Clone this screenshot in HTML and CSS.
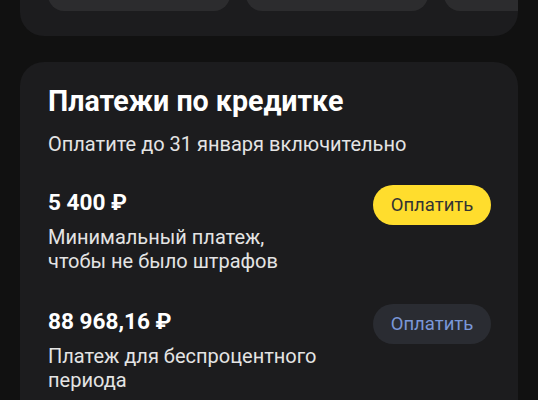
FILE: index.html
```html
<!DOCTYPE html>
<html lang="ru">
<head>
<meta charset="utf-8">
<link rel="stylesheet" href="styles.css">
</head>
<body>
<div class="page">
  <section class="card card-top">
    <div class="tiles">
      <div class="tile"></div>
      <div class="tile"></div>
      <div class="tile"></div>
    </div>
  </section>
  <section class="card card-pay">
    <h2 class="title">Платежи по кредитке</h2>
    <p class="subtitle">Оплатите до 31 января включительно</p>
    <div class="row">
      <div class="info">
        <div class="amount">5 400 ₽</div>
        <div class="desc">Минимальный платеж,<br>чтобы не было штрафов</div>
      </div>
      <button class="btn btn-primary">Оплатить</button>
    </div>
    <div class="row">
      <div class="info">
        <div class="amount">88 968,16 ₽</div>
        <div class="desc">Платеж для беспроцентного<br>периода</div>
      </div>
      <button class="btn btn-secondary">Оплатить</button>
    </div>
  </section>
</div>
</body>
</html>
```
FILE: styles.css
```css
* { box-sizing: border-box; }
html, body {
  margin: 0;
  padding: 0;
  background: #111111;
}
body {
  width: 538px;
  height: 400px;
  overflow: hidden;
  font-family: Roboto, "Noto Sans", sans-serif;
  color: #ffffff;
}
.page {
  height: 400px;
  padding: 0 20px;
  display: flex;
  flex-direction: column;
  gap: 26px;
}
.card {
  background: #1c1c1e;
  border-radius: 24px;
  overflow: hidden;
}
.card-top {
  flex: 0 0 auto;
  margin-top: -74px;
  padding: 25px 0 25px 28px;
}
.tiles {
  display: flex;
  gap: 16px;
}
.tile {
  flex: 0 0 182px;
  height: 60px;
  background: #2c2c2e;
  border-radius: 16px;
}
.card-pay {
  flex: 1 1 auto;
  min-height: 0;
  padding: 22px 27px 0 28px;
  border-radius: 24px 24px 0 0;
}
.title {
  margin: 0;
  font-size: 28.6px;
  line-height: 34px;
  font-weight: 700;
  color: #ffffff;
}
.subtitle {
  margin: 13px 0 0 0;
  font-size: 20px;
  line-height: 26px;
  color: #e4e4e4;
}
.row {
  display: flex;
  justify-content: space-between;
  align-items: flex-start;
  margin-top: 32px;
}
.row + .row {
  margin-top: 35px;
}
.amount {
  font-size: 22.6px;
  line-height: 28px;
  font-weight: 700;
  color: #ffffff;
}
.desc {
  margin-top: 8px;
  font-size: 20px;
  line-height: 24px;
  color: #e4e4e4;
}
.btn {
  margin-top: -4px;
  width: 118px;
  height: 40px;
  border: none;
  border-radius: 20px;
  font-family: inherit;
  font-size: 18.5px;
  padding: 0;
}
.btn-primary {
  background: #ffdd2d;
  color: #333333;
}
.btn-secondary {
  background: #2a2c32;
  color: #7a97d8;
}
```
